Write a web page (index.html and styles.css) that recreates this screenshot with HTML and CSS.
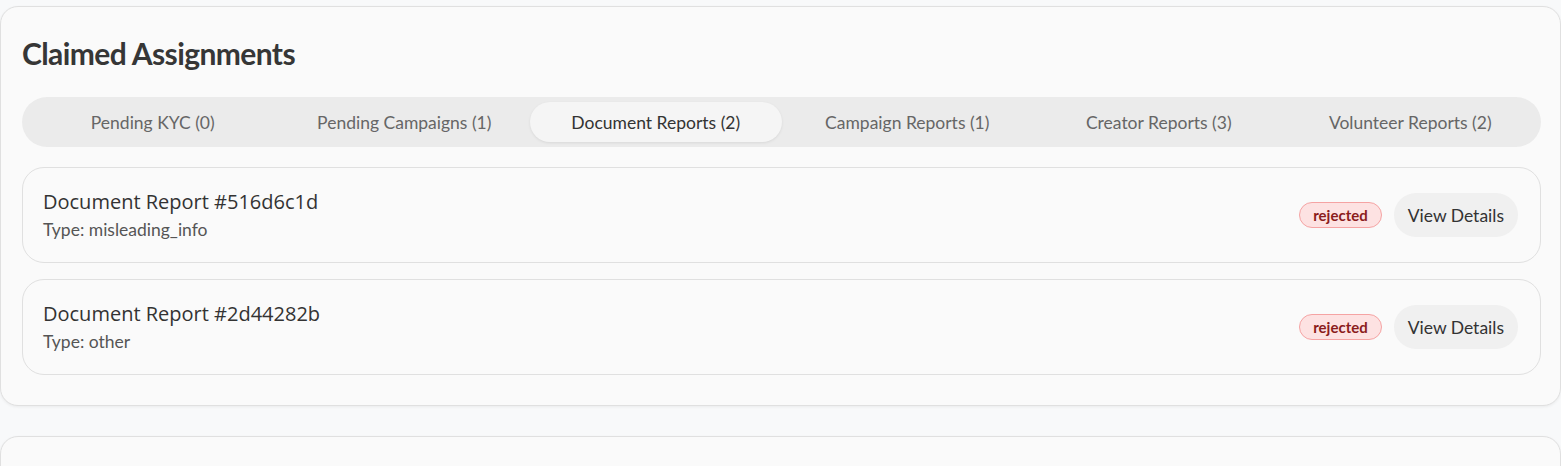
FILE: index.html
```html
<!DOCTYPE html>
<html lang="en">
<head>
<meta charset="utf-8">
<title>Claimed Assignments</title>
<link rel="stylesheet" href="styles.css">
</head>
<body>
<section class="panel">
  <h2 class="panel-title">Claimed Assignments</h2>
  <nav class="tabs">
    <button class="tab">Pending KYC (0)</button>
    <button class="tab">Pending Campaigns (1)</button>
    <button class="tab active">Document Reports (2)</button>
    <button class="tab">Campaign Reports (1)</button>
    <button class="tab">Creator Reports (3)</button>
    <button class="tab">Volunteer Reports (2)</button>
  </nav>
  <div class="list">
    <div class="item">
      <div class="item-info">
        <div class="item-title">Document Report #516d6c1d</div>
        <div class="item-type">Type: misleading_info</div>
      </div>
      <div class="item-actions">
        <span class="badge">rejected</span>
        <button class="btn">View Details</button>
      </div>
    </div>
    <div class="item">
      <div class="item-info">
        <div class="item-title">Document Report #2d44282b</div>
        <div class="item-type">Type: other</div>
      </div>
      <div class="item-actions">
        <span class="badge">rejected</span>
        <button class="btn">View Details</button>
      </div>
    </div>
  </div>
</section>
<section class="panel panel-next"></section>
</body>
</html>
```

FILE: styles.css
```css
* { box-sizing: border-box; }
html, body { margin: 0; padding: 0; }
body {
  background: #f8f9fa;
  font-family: Lato, "Open Sans", sans-serif;
  color: #333;
  overflow: hidden;
}
.panel {
  margin: 6px 0 0 0;
  background: #fafafa;
  border: 1px solid #e0e0e0;
  border-radius: 18px;
  box-shadow: 0 1px 3px rgba(0,0,0,0.06);
  padding: 28px 19px 30px 21px;
}
.panel-next {
  margin-top: 30px;
  height: 80px;
}
.panel-title {
  margin: 0 0 26px 0;
  font-size: 30px;
  line-height: 36px;
  font-weight: 700;
  letter-spacing: -0.02em;
  color: #363636;
}
.tabs {
  display: grid;
  grid-template-columns: repeat(6, 1fr);
  background: #ebebeb;
  border-radius: 25px;
  padding: 5px;
  height: 50px;
}
.tab {
  border: 0;
  background: transparent;
  font-family: inherit;
  font-size: 17.5px;
  color: #666;
  border-radius: 20px;
  height: 40px;
  padding: 0;
  cursor: pointer;
}
.tab.active {
  background: #f5f5f5;
  color: #333;
  box-shadow: 0 1px 3px rgba(0,0,0,0.08);
}
.list {
  margin-top: 20px;
  display: flex;
  flex-direction: column;
  gap: 16px;
}
.item {
  display: flex;
  align-items: center;
  justify-content: space-between;
  height: 96px;
  border: 1px solid #e0e0e0;
  border-radius: 22px;
  background: #fafafa;
  padding: 0 22px 0 20px;
}
.item-title {
  font-family: "Open Sans", Lato, sans-serif;
  font-size: 20px;
  line-height: 28px;
  color: #333;
}
.item-type {
  margin-top: 2px;
  font-size: 17.5px;
  line-height: 24px;
  color: #555;
}
.item-actions {
  display: flex;
  align-items: center;
  gap: 12px;
}
.badge {
  display: inline-flex;
  align-items: center;
  height: 26px;
  padding: 0 13px;
  border-radius: 13px;
  background: #fde2e2;
  border: 1px solid #f5a3a3;
  color: #8b1c1c;
  font-size: 15px;
  font-weight: 700;
}
.btn {
  border: 0;
  background: #f0f0f0;
  border-radius: 22px;
  height: 44px;
  padding: 0 14px;
  font-family: inherit;
  font-size: 17.5px;
  color: #333;
  cursor: pointer;
}
```
